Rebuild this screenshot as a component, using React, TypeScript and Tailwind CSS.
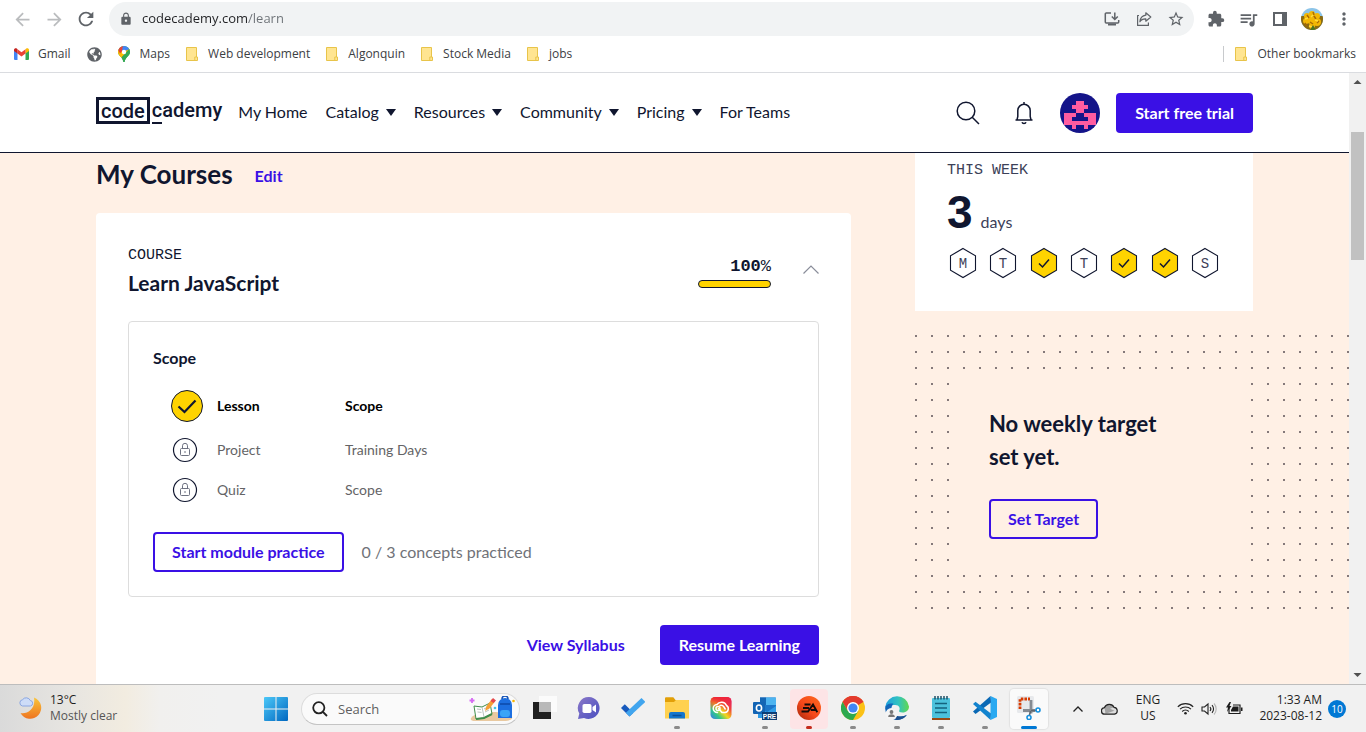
import type { ReactNode } from "react";
import {
  MdArrowBack,
  MdArrowForward,
  MdExtension,
  MdLock,
  MdMoreVert,
  MdQueueMusic,
  MdRefresh,
  MdStarBorder,
} from "react-icons/md";
import { FaGlobeAmericas } from "react-icons/fa";

const NAVY = "#10162f";

/* ---------- Browser chrome ---------- */

function ToolButton({ label, children }: { label: string; children: ReactNode }) {
  return (
    <button aria-label={label} className="flex h-8 w-8 shrink-0 items-center justify-center text-[#5f6368]">
      {children}
    </button>
  );
}

function InstallIcon() {
  return (
    <svg width="16" height="16" viewBox="0 0 16 16" fill="none" stroke="#5f6368" strokeWidth="1.5">
      <path d="M7 2H2.2a.9.9 0 0 0-.9.9v8.2c0 .5.4.9.9.9h11.600a.9.9 0 0 0 .9-.9V9" />
      <path d="M10.800 1.500v6.500M7.800 5.500l3 3 3-3" />
      <path d="M4 13.500h8" strokeWidth="2" />
    </svg>
  );
}

function ShareIcon() {
  return (
    <svg width="16" height="16" viewBox="0 0 16 16" fill="none" stroke="#5f6368" strokeWidth="1.2" strokeLinejoin="round">
      <path d="M3 4.500H1.600v9.900h10.800V11.500" />
      <path d="M9.800 1.800l5 4.200-5 4.200V7.800C7 7.700 5 8.600 3.900 10.800 4.200 7.200 6.200 4.700 9.800 4.200z" />
    </svg>
  );
}

function PhotoAvatar() {
  const petals: [number, number, number][] = [
    [6, 8, 3], [11, 6, 3], [16, 8, 3], [5, 13, 3], [10, 12, 4], [16, 14, 4], [11, 18, 3],
  ];
  return (
    <svg width="22" height="22" viewBox="0 0 22 22">
      <clipPath id="photo"><circle cx="11" cy="11" r="11" /></clipPath>
      <g clipPath="url(#photo)">
        <rect width="22" height="22" fill="#8cc4e8" />
        <path d="M0 8h22v14H0z" fill="#8a6a12" />
        {petals.map(([x, y, r]) => <circle key={`${x}-${y}`} cx={x} cy={y} r={r} fill="#f2b705" />)}
        <path d="M6 7l2 3M13 8l2 3M9 14l3 2M16 15l2-2M4 15l2 3M12 4l1 3" stroke="#a86a06" strokeWidth="1.400" />
        <path d="M4 11l3-1M10 9l2-2M14 12l3 1M8 18l3 1" stroke="#ffdc3c" strokeWidth="1.500" />
        <path d="M9 22l3-5 3 5z" fill="#4c7420" />
      </g>
    </svg>
  );
}

function FolderIcon() {
  return (
    <svg width="12" height="14" viewBox="0 0 12 14" className="mr-[10px] shrink-0">
      <path d="M.5.5h10v9.500h1v3.500H.5z" fill="#ffe591" stroke="#e8c44a" />
      <path d="M8.800 13.500V10h1.700" fill="none" stroke="#e8c44a" />
    </svg>
  );
}

function GmailIcon() {
  return (
    <svg width="15" height="12" viewBox="0 0 15 12" className="mr-[9px] shrink-0">
      <path d="M0 2v9a1 1 0 0 0 1 1h2.500V4.500z" fill="#4285f4" />
      <path d="M15 2v9a1 1 0 0 1-1 1h-2.500V4.500z" fill="#34a853" />
      <path d="M11.500 1.200V5.500L15 3V2c0-1.700-1.900-2.200-3-1.300z" fill="#fbbc04" />
      <path d="M3.500 5.500V1.200L7.500 4.200l4-3v4.300l-4 3z" fill="#ea4335" />
      <path d="M0 2v1l3.500 2.500V1.200L3 .7C1.900-.2 0 .3 0 2z" fill="#c5221f" />
    </svg>
  );
}

function MapsIcon() {
  return (
    <svg width="12" height="16" viewBox="0 0 12 16" className="mr-[10px] shrink-0">
      <clipPath id="pin"><path d="M6 0a6 6 0 0 1 6 6c0 3.800-4.600 5.200-5.300 9.400-.1.800-1.300.8-1.400 0C4.600 11.200 0 9.800 0 6a6 6 0 0 1 6-6z" /></clipPath>
      <g clipPath="url(#pin)">
        <path d="M0 0h12v16H0z" fill="#34a853" />
        <path d="M0 4l6 2-5 6-3-5z" fill="#fbbc04" />
        <path d="M-1 2l2-3h5l-1 5-3 3.500z" fill="#ea4335" />
        <path d="M5-1h6l1 4-5 5-3-3z" fill="#4285f4" />
        <path d="M12 3L3 12l-2-3 6-4z" fill="#fbbc04" />
        <path d="M12 2v14H3l1-5z" fill="#34a853" />
      </g>
      <circle cx="6" cy="6" r="2.200" fill="#fff" />
    </svg>
  );
}

function Bookmark({ icon, label }: { icon: ReactNode; label: string }) {
  return (
    <a href="#" className="flex items-center">
      {icon}
      <span>{label}</span>
    </a>
  );
}

function BrowserBar() {
  return (
    <div className="shrink-0 border-b border-[#dadce0] bg-white font-['Open_Sans','Noto_Sans',sans-serif] text-[#3c4043]">
      <div className="flex h-[38px] items-center px-[6px]">
        <button aria-label="Back" className="flex w-8 justify-center text-[#babcbe]"><MdArrowBack size={21} /></button>
        <button aria-label="Forward" className="flex w-8 justify-center text-[#babcbe]"><MdArrowForward size={21} /></button>
        <ToolButton label="Reload"><MdRefresh size={22} /></ToolButton>
        <div className="ml-[7px] mr-[6px] flex h-[34px] min-w-0 flex-1 items-center rounded-full bg-[#f1f3f4] pl-[10px] pr-[2px]">
          <MdLock size={14} className="mr-[9px] shrink-0 text-[#5f6368]" />
          <input
            aria-label="Address"
            defaultValue="codecademy.com/learn"
            className="min-w-0 flex-1 bg-[linear-gradient(90deg,#202124_106px,#6b7075_106px)] bg-clip-text text-[13px] text-transparent outline-none"
          />
          <ToolButton label="Install app"><InstallIcon /></ToolButton>
          <ToolButton label="Share"><ShareIcon /></ToolButton>
          <ToolButton label="Bookmark this page"><MdStarBorder size={18} /></ToolButton>
        </div>
        <ToolButton label="Extensions"><MdExtension size={18} /></ToolButton>
        <ToolButton label="Media"><MdQueueMusic size={21} /></ToolButton>
        <ToolButton label="Side panel">
          <svg width="14" height="14" viewBox="0 0 14 14"><path d="M0 0h14v14H0zM2 2v10h7V2z" fill="#5f6368" fillRule="evenodd" /></svg>
        </ToolButton>
        <ToolButton label="Profile"><PhotoAvatar /></ToolButton>
        <ToolButton label="Menu"><MdMoreVert size={20} /></ToolButton>
      </div>
      <div className="flex h-[34px] items-center gap-4 px-[14px] pb-[2px] text-xs">
        <Bookmark icon={<GmailIcon />} label="Gmail" />
        <a href="#" aria-label="Website"><FaGlobeAmericas size={15} className="text-[#5f6368]" /></a>
        <Bookmark icon={<MapsIcon />} label="Maps" />
        <Bookmark icon={<FolderIcon />} label="Web development" />
        <Bookmark icon={<FolderIcon />} label="Algonquin" />
        <Bookmark icon={<FolderIcon />} label="Stock Media" />
        <Bookmark icon={<FolderIcon />} label="jobs" />
        <div className="-mr-1 ml-auto flex h-4 items-center border-l border-[#c8cacd] pl-[11px]">
          <Bookmark icon={<FolderIcon />} label="Other bookmarks" />
        </div>
      </div>
    </div>
  );
}

/* ---------- Site header ---------- */

function NavItem({ label, menu }: { label: string; menu?: boolean }) {
  if (!menu) return <a href="#">{label}</a>;
  return (
    <button className="flex items-center gap-[7px]">
      {label}
      <svg width="10" height="7" viewBox="0 0 10 7"><path d="M0 0h10L5 7z" fill={NAVY} /></svg>
    </button>
  );
}

function PixelAvatar() {
  return (
    <svg width="40" height="40" viewBox="0 0 10 10" shapeRendering="crispEdges">
      <clipPath id="round"><circle cx="5" cy="5" r="5" /></clipPath>
      <circle cx="5" cy="5" r="5" fill="#141489" shapeRendering="auto" />
      <path
        clipPath="url(#round)"
        fill="#ff5ca0"
        d="M4 2h2v1h1v1H6v1h3v3H7v1H6V8H4v1H3V8H1V5h3V4H3V3h1zM4 5v1H3v1h4V6H6V5z"
        fillRule="evenodd"
      />
    </svg>
  );
}

function Logo() {
  return (
    <a href="#" className="flex items-center pb-[5px] font-[Roboto,sans-serif] text-[20px] font-medium leading-[20px]">
      <span className="flex h-[27px] items-center border-[3px] border-[#10162f] px-[2px]">code</span>
      <span className="ml-[2px]">
        <span className="inline-block h-[26px] border-b-2 border-[#10162f] pt-[2px]">c</span>ademy
      </span>
    </a>
  );
}

function SiteHeader() {
  return (
    <header className="flex h-20 shrink-0 items-center border-b border-[#10162f] bg-white px-24 pt-px">
      <Logo />
      <nav className="ml-4 flex items-center gap-[18px] pb-[2px]">
        <NavItem label="My Home" />
        <NavItem label="Catalog" menu />
        <NavItem label="Resources" menu />
        <NavItem label="Community" menu />
        <NavItem label="Pricing" menu />
        <NavItem label="For Teams" />
      </nav>
      <div className="ml-auto flex items-center">
        <button aria-label="Search" className="mr-8">
          <svg width="24" height="24" viewBox="0 0 24 24" fill="none" stroke={NAVY} strokeWidth="1.500">
            <circle cx="10" cy="10" r="8.800" />
            <path d="M16.200 16.200L23 23" />
          </svg>
        </button>
        <button aria-label="Notifications" className="mr-6">
          <svg width="24" height="24" viewBox="0 0 24 24" fill="none" stroke={NAVY} strokeWidth="1.500">
            <path d="M12 1v2M3.500 19h17M5 19l.8-3.500V9.500a6.200 6.200 0 0 1 12.400 0v6L19 19" />
            <path d="M10 21.300c.5 1.500 3.500 1.500 4 0" />
          </svg>
        </button>
        <button aria-label="Account" className="mr-4"><PixelAvatar /></button>
        <button className="h-10 rounded bg-[#3a10e5] px-[19px] font-bold text-white">Start free trial</button>
      </div>
    </header>
  );
}

/* ---------- My courses ---------- */

function DoneIcon() {
  return (
    <svg width="32" height="32" viewBox="0 0 32 32" fill="none" stroke={NAVY}>
      <circle cx="16" cy="16" r="15.500" fill="#ffd300" />
      <path d="M7.500 16.500l6 5.500L24.500 10.500" strokeWidth="2.200" />
    </svg>
  );
}

function LockedIcon() {
  return (
    <svg width="28" height="28" viewBox="0 0 28 28" fill="none" stroke={NAVY}>
      <circle cx="14" cy="14" r="11.500" strokeWidth="1.200" />
      <g stroke="#6f7382">
        <rect x="9.500" y="12.500" width="9" height="7" rx="1" />
        <path d="M11.500 12.500v-2.700a2.500 2.500 0 0 1 5 0v2.700M14 15v2" />
      </g>
    </svg>
  );
}

const modules = [
  { kind: "Lesson", name: "Scope", done: true },
  { kind: "Project", name: "Training Days", done: false },
  { kind: "Quiz", name: "Scope", done: false },
];

function Courses() {
  return (
    <section>
      <div className="flex h-[60px] items-start gap-[22px]">
        <h1 className="text-[26px] font-bold leading-[42px]">My Courses</h1>
        <button className="pt-[11px] font-bold leading-6 text-[#3a10e5]">Edit</button>
      </div>
      <article className="rounded-sm bg-white p-8">
        <div className="flex items-center">
          <div>
            <p className="font-['Liberation_Mono',monospace] text-[15px] leading-[22px]">COURSE</p>
            <h2 className="text-[21px] font-bold leading-8">Learn JavaScript</h2>
          </div>
          <div className="ml-auto flex flex-col items-end">
            <p className="font-['Liberation_Mono',monospace] text-[17px] leading-6">
              <strong>100</strong>%
            </p>
            <div className="mb-px mt-px h-2 w-[73px] rounded-full border border-[#10162f] bg-[#ffd300]" />
          </div>
          <button aria-label="Collapse course" className="ml-8">
            <svg width="16" height="16" viewBox="0 0 16 16" fill="none" stroke="#8a8d9a" strokeWidth="1.200">
              <path d="M.5 9.500L8 2l7.500 7.500" />
            </svg>
          </button>
        </div>
        <div className="mt-[22px] rounded-sm border border-[#dddddd] p-6">
          <h3 className="font-bold leading-6">Scope</h3>
          <ul className="mt-3 text-sm">
            {modules.map((m) => (
              <li
                key={m.kind}
                className={
                  m.done
                    ? "flex h-12 items-center pl-[18px] font-bold text-black"
                    : "flex h-10 items-center pl-[18px] text-[#646466]"
                }
              >
                <span className="w-[46px]">{m.done ? <DoneIcon /> : <LockedIcon />}</span>
                <span className="w-32">{m.kind}</span>
                <span>{m.name}</span>
              </li>
            ))}
          </ul>
          <div className="mt-[22px] flex items-center gap-[18px]">
            <button className="h-10 rounded border-2 border-[#3a10e5] px-[17px] font-bold text-[#3a10e5]">
              Start module practice
            </button>
            <span className="text-[#707278]">0 / 3 concepts practiced</span>
          </div>
        </div>
        <div className="mt-7 flex items-center justify-end gap-4">
          <button className="h-10 px-[19px] font-bold text-[#3a10e5]">View Syllabus</button>
          <button className="h-10 rounded bg-[#3a10e5] px-[19px] font-bold text-white">Resume Learning</button>
        </div>
      </article>
    </section>
  );
}

/* ---------- Weekly target ---------- */

const week = [
  { day: "M", done: false },
  { day: "T", done: false },
  { day: "W", done: true },
  { day: "T", done: false },
  { day: "T", done: true },
  { day: "F", done: true },
  { day: "S", done: false },
];

function DayHexagon({ day, done }: { day: string; done: boolean }) {
  return (
    <svg width="32" height="32" viewBox="0 0 32 32" fill="none" stroke={NAVY}>
      <path d="M16 1.500l12.500 7.300v14.400L16 30.500 3.500 23.200V8.800z" fill={done ? "#ffd300" : "#fff"} strokeWidth="1.100" />
      {done ? (
        <path d="M11 16.500l3.500 3.500L21 12.500" strokeWidth="1.500" />
      ) : (
        <text x="16" y="21" textAnchor="middle" fill="#3c4158" stroke="none" fontSize="14" fontFamily="Liberation Mono">
          {day}
        </text>
      )}
    </svg>
  );
}

function WeeklyTarget() {
  return (
    <aside>
      <div className="bg-white px-8 pb-8 pt-2">
        <h2 className="font-['Liberation_Mono',monospace] text-[15px] leading-5 text-[#3c4158]">THIS WEEK</h2>
        <p className="mt-[6px] flex h-12 items-baseline gap-2">
          <strong className="font-['Liberation_Sans',sans-serif] text-[46px] leading-[50px]">3</strong>
          <span className="leading-5 text-[#3c4158]">days</span>
        </p>
        <div className="mt-3 flex justify-between">
          {week.map((d, i) => <DayHexagon key={i} day={d.day} done={d.done} />)}
        </div>
      </div>
      <div className="-mr-24 mt-6 bg-[radial-gradient(circle_at_1px_1px,#85797a_1px,transparent_1px)] bg-[size:16px_16px] py-[34px] pl-[34px] pr-[100px]">
        <div className="bg-[#fff0e5] px-10 pb-9 pt-[38px]">
          <h2 className="text-[22px] font-bold leading-[33px]">No weekly target<br />set yet.</h2>
          <button className="mt-[26px] h-10 rounded border-2 border-[#3a10e5] px-[17px] font-bold text-[#3a10e5]">Set Target</button>
        </div>
      </div>
    </aside>
  );
}

function Scrollbar() {
  return (
    <div aria-hidden="true" className="flex w-[17px] shrink-0 flex-col items-center bg-[#f1f1f1]">
      <svg width="17" height="17" viewBox="0 0 17 17"><path d="M4.500 11l4-4 4 4z" fill="#505050" /></svg>
      <div className="mt-[42px] h-32 w-[13px] bg-[#c1c1c1]" />
      <svg width="17" height="17" viewBox="0 0 17 17" className="mt-auto"><path d="M4.500 6l4 4 4-4z" fill="#505050" /></svg>
    </div>
  );
}

/* ---------- Taskbar ---------- */

function TaskApp({ label, state, children }: { label: string; state?: "open" | "alert" | "active"; children: ReactNode }) {
  const tile =
    state === "alert" ? "bg-[#fde4e6]" : state === "active" ? "bg-[#fafafa] shadow-[0_0_1px_1px_#e2e2e2]" : "";
  const mark =
    state === "alert" ? "w-[6px] bg-[#c42b1c]" : state === "active" ? "w-4 bg-[#0078d4]" : state === "open" ? "w-[6px] bg-[#8a8a8a]" : "w-0";
  return (
    <button aria-label={label} className="flex w-11 justify-center">
      <span className={`flex h-10 w-[38px] flex-col items-center justify-between rounded pt-[7px] ${tile}`}>
        <svg width="24" height="24" viewBox="0 0 24 24">{children}</svg>
        <span className={`h-[3px] rounded-full ${mark}`} />
      </span>
    </button>
  );
}

function TaskApps() {
  return (
    <div className="ml-[3px] flex shrink-0">
      <TaskApp label="Task view">
        <path d="M0 6h18v17H0z" fill="#1f1f1f" />
        <path d="M6 0h18v16H6z" fill="#fbfbfb" fillOpacity=".96" />
        <path d="M6 6h12v10H6z" fill="#b9b9b9" />
      </TaskApp>
      <TaskApp label="Chat">
        <defs><linearGradient id="chat" x2="1" y2="1"><stop stopColor="#8a78c8" /><stop offset="1" stopColor="#4a4fc0" /></linearGradient></defs>
        <path d="M12 1a11 11 0 1 1-5 21l-6 1 1.300-5.500A11 11 0 0 1 12 1z" fill="url(#chat)" />
        <rect x="5.500" y="8" width="9" height="9" rx="1.800" fill="#fff" />
        <path d="M15.500 11l3.500-2.500v8L15.500 14z" fill="#fff" />
      </TaskApp>
      <TaskApp label="To Do">
        <path d="M0 12l3.800-3.800 8.500 8.500L8.500 20.500z" fill="#185abd" />
        <path d="M4.800 16.800L20.500 2 24.300 5.900 8.600 20.600z" fill="#41a5ee" />
      </TaskApp>
      <TaskApp label="File Explorer" state="open">
        <path d="M0 2.500C0 1.700.5 1.200 1.300 1.200h7L10.500 4H23c.6 0 1 .4 1 1v17H0z" fill="#e2a009" />
        <path d="M0 6h9l2-2h12c.6 0 1 .4 1 1v17.500H0z" fill="#ffd150" />
        <path d="M4 22.500V18a2 2 0 0 1 2-2h12a2 2 0 0 1 2 2v4.500z" fill="#1576cc" />
        <path d="M7.500 19.500h9" stroke="#0a4f96" strokeWidth="1.500" />
      </TaskApp>
      <TaskApp label="Creative Cloud">
        <defs>
          <linearGradient id="cc" x1="0" y1="1" x2="1" y2="0">
            <stop stopColor="#3975f5" /><stop offset=".25" stopColor="#31c986" /><stop offset=".45" stopColor="#f2d81c" /><stop offset=".7" stopColor="#f04437" /><stop offset="1" stopColor="#d62bb3" />
          </linearGradient>
          <linearGradient id="cc2" x2="0" y2="1"><stop stopColor="#ef2438" /><stop offset=".6" stopColor="#ef2438" stopOpacity="0" /></linearGradient>
        </defs>
        <rect x="1.500" y="1" width="21" height="22" rx="4.500" fill="url(#cc)" />
        <rect x="1.500" y="1" width="21" height="22" rx="4.500" fill="url(#cc2)" />
        <g fill="none" stroke="#fff" strokeWidth="1.500" strokeLinecap="round">
          <path d="M8.500 16.500a4 4 0 0 1-.5-8 5.500 5.500 0 0 1 9.500 1 3.800 3.800 0 0 1-1.500 7h-3l-3.500-4" />
          <circle cx="9" cy="12.500" r="2" />
          <path d="M11 9.500c2-1 3 0 4 1.500l1.200 2" />
        </g>
      </TaskApp>
      <TaskApp label="Outlook" state="open">
        <path d="M7 1.500h15a1 1 0 0 1 1 1V22H7z" fill="#1b75c9" />
        <path d="M13 1.500h10V9H13z" fill="#4db4f0" />
        <path d="M7 1.500h6V9H7z" fill="#1466b5" />
        <path d="M5 11l9 5 9-6v12H5z" fill="#2f9be6" />
        <rect x="0" y="6" width="12" height="12" rx="1" fill="#1264b4" />
        <ellipse cx="6" cy="12" rx="2.600" ry="3" fill="none" stroke="#fff" strokeWidth="1.600" />
        <rect x="9" y="16" width="15" height="8" fill="#0d3c73" />
        <text x="16.500" y="22.500" textAnchor="middle" fill="#fff" fontSize="6.500" fontWeight="700" fontFamily="Liberation Sans">PRE</text>
      </TaskApp>
      <TaskApp label="EA" state="alert">
        <defs><linearGradient id="ea" x1="1" x2="0" y2="1"><stop stopColor="#ff6a1e" /><stop offset=".55" stopColor="#f5471a" /><stop offset="1" stopColor="#a3260b" /></linearGradient></defs>
        <circle cx="12" cy="12" r="12" fill="url(#ea)" />
        <path d="M7.500 8.500h6M6 12h6M4.500 15.500h6.500l5-7 4.300 7.800M13.800 14h5" fill="none" stroke="#160b08" strokeWidth="1.900" />
      </TaskApp>
      <TaskApp label="Chrome" state="open">
        <circle cx="12" cy="12" r="12" fill="#fbc116" />
        <path d="M12 12L1.600 6A12 12 0 0 1 22.400 6z" fill="#e33b2e" />
        <path d="M12 6h10.400A12 12 0 0 0 1.600 6l5.200 9z" fill="#e33b2e" />
        <path d="M1.600 6a12 12 0 0 0 10.400 18l5.200-9H6.800z" fill="#2da94f" />
        <circle cx="12" cy="12" r="6" fill="#fff" />
        <circle cx="12" cy="12" r="4.600" fill="#4285f4" />
      </TaskApp>
      <TaskApp label="Edge" state="open">
        <defs><linearGradient id="edge" x2="1"><stop stopColor="#1e9fe0" /><stop offset=".55" stopColor="#31c3c0" /><stop offset="1" stopColor="#63d84e" /></linearGradient></defs>
        <path d="M.2 11A12 12 0 0 1 24 10.500c0 3.500-2.500 6-6.500 6-2.500 0-4-1-3.300-2 1.200-2 .2-5.500-4-5.500C6 9 1.500 11 .2 11z" fill="url(#edge)" />
        <path d="M.1 12C1 8 5.500 7 8.500 7.800 5 11 6 18 12 20c4 1.200 7.500 0 9.800-1A12 12 0 0 1 .1 12z" fill="#1266b8" />
        <path d="M8.500 12.500c-1.500 5 3 8.500 8 8 2.500-.3 4.500-1 5.500-1.700A12 12 0 0 1 12 24c-6-1-6-9-3.500-11.500z" fill="#1b4f8e" />
        <circle cx="6.500" cy="18" r="6" fill="#f4f4f4" />
        <circle cx="6.500" cy="16" r="1.900" fill="#777" />
        <path d="M3.200 21a3.300 2.800 0 0 1 6.600 0z" fill="#777" />
      </TaskApp>
      <TaskApp label="Notepad" state="open">
        <path d="M3 22h18v2H3z" fill="#9a4a15" />
        <rect x="3" y="2" width="18" height="20" rx="1" fill="#4cc2dc" />
        <path d="M6 7.500h12M6 12h12M6 16.500h12" stroke="#14637e" strokeWidth="1.400" />
        <path d="M6 0v3.500M9 0v3.500M12 0v3.500M15 0v3.500M18 0v3.500" stroke="#1c4f66" strokeWidth="1.500" />
      </TaskApp>
      <TaskApp label="Visual Studio Code" state="open">
        <path d="M17.500 0L24 3v18l-6.500 3z" fill="#29a9f1" />
        <path d="M17.500 0L0 15.500 2.500 18 18 6.500z" fill="#0a69b5" />
        <path d="M0 8l2.500-2.200L18 17.500 17.500 24z" fill="#1283ce" />
      </TaskApp>
      <TaskApp label="Snipping Tool" state="active">
        <rect x="0" y="0" width="17" height="17" rx="1.500" fill="#e7e9ec" />
        <path d="M3 13V3h10" fill="none" stroke="#d83b01" strokeWidth="2.800" strokeDasharray="2.600 1" />
        <path d="M14 4v13.500M6 14.500h12" fill="none" stroke="#858b92" strokeWidth="2.800" />
        <path d="M14 14.500h6M13.500 15l-1.500 6" stroke="#5f666e" strokeWidth="1.500" />
        <g fill="#fff" stroke="#1490df" strokeWidth="1.600"><circle cx="21" cy="14" r="2" /><circle cx="12" cy="21.500" r="2" /></g>
      </TaskApp>
    </div>
  );
}

function SearchArt() {
  return (
    <svg width="46" height="26" viewBox="0 0 46 26" className="shrink-0">
      <path d="M2 22c4-5 12-6 22-6s18 3 19 5-2 4-8 4H6c-3 0-5-1-4-3z" fill="#e9c9a0" />
      <path d="M5 10l8 1 8-4 2 11-8 4-8 1z" fill="#fff" stroke="#3f8d4b" strokeWidth="1" />
      <path d="M7 23l8-1 8-4" fill="none" stroke="#3f8d4b" strokeWidth="2" />
      <path d="M13 11l2 10M8 13l4 .5M8.500 16l4 .4M15 13l4-2M16 16l4-2" stroke="#bac4c0" />
      <path d="M16 15l1.500-5 5.500-7 3 2.500-5.500 7z" fill="#f6a037" />
      <path d="M21.500 5L24 2l3 2.500L24.500 7z" fill="#e5484d" />
      <path d="M29 9a7 7 0 0 1 14 0v13H29z" fill="#1d6fe0" />
      <path d="M33 3c0-4 6-4 6 0" fill="none" stroke="#1552b5" strokeWidth="1.500" />
      <rect x="31" y="14" width="10" height="7" rx="3" fill="#39a4f7" />
      <path d="M31 8h10" stroke="#0d49a8" strokeWidth="1.500" />
      <path d="M3 2v5M.5 4.500h5" stroke="#d56bf2" strokeWidth="1.800" />
      <circle cx="26" cy="12" r="1.300" fill="#3ec6e8" />
      <circle cx="44.500" cy="5" r="1.300" fill="#f7b500" />
    </svg>
  );
}

function Taskbar() {
  return (
    <footer className="flex h-12 shrink-0 items-center border-t border-[#bdbdbd] bg-[linear-gradient(90deg,#dadada,#e7e5e1_70px,#f2ece0_125px,#f1f0ee_160px,#f1f1f1_220px)] font-['Open_Sans','Noto_Sans',sans-serif] text-xs leading-4 text-[#1f1f1f]">
      <button className="flex w-[264px] items-center pb-px pl-[18px] text-left">
        <svg width="24" height="24" viewBox="0 0 24 24" className="mr-2 shrink-0">
          <defs><linearGradient id="moon" x2="0" y2="1"><stop stopColor="#f9c53b" /><stop offset="1" stopColor="#ee7420" /></linearGradient></defs>
          <path d="M16 1.500A11 11 0 1 1 2.500 17C9 18.500 18 13 16 1.500z" fill="url(#moon)" />
          <path d="M4.500 10a3.200 3.200 0 0 1 0-6.300 4.500 4.500 0 0 1 7.800.8 2.800 2.800 0 0 1 .2 5.500z" fill="#cddcf8" stroke="#8aa6e2" />
        </svg>
        <span><span className="block">13°C</span><span className="block text-[#555]">Mostly clear</span></span>
      </button>
      <button aria-label="Start" className="shrink-0">
        <svg width="24" height="24" viewBox="0 0 24 24">
          <defs><linearGradient id="win" x2="1" y2="1"><stop stopColor="#4cc8f8" /><stop offset="1" stopColor="#0067c0" /></linearGradient></defs>
          <path d="M1 0h10.500v11.500H0V1a1 1 0 0 1 1-1zM12.500 0H23a1 1 0 0 1 1 1v10.500H12.500zM0 12.500h11.500V24H1a1 1 0 0 1-1-1zM12.500 12.500H24V23a1 1 0 0 1-1 1H12.500z" fill="url(#win)" />
        </svg>
      </button>
      <label className="ml-[13px] flex h-8 w-[219px] shrink-0 items-center rounded-full border border-[#dcdcdc] border-b-[#c4c4c4] bg-[#fafafa] pl-[10px] pr-1">
        <svg width="16" height="16" viewBox="0 0 16 16" fill="none" stroke="#222" strokeWidth="1.800">
          <circle cx="6.800" cy="6.800" r="5.600" /><path d="M11 11l4 4" />
        </svg>
        <input aria-label="Search" placeholder="Search" className="ml-[10px] w-0 flex-1 text-[13px] outline-none placeholder:text-[#5f5f5f]" />
        <SearchArt />
      </label>
      <TaskApps />
      <div className="ml-auto flex items-center pr-5">
        <svg width="10" height="6" viewBox="0 0 10 6" fill="none" stroke="#222" strokeWidth="1.300"><path d="M.5 5.500L5 1l4.500 4.500" /></svg>
        <svg width="17" height="12" viewBox="0 0 17 12" className="ml-[18px]">
          <path d="M4 11.200a3.300 3.300 0 0 1-.5-6.600 5.200 5.200 0 0 1 9.500-.3 3.500 3.500 0 0 1 .5 6.900z" fill="#dedede" />
          <path d="M3.500 4.600a5.200 5.200 0 0 1 9.500-.3l-4 1.500 4.500 2-9 2.900z" fill="#a2a2a2" />
          <path d="M4 11.200a3.300 3.300 0 0 1-.5-6.600 5.200 5.200 0 0 1 9.500-.3 3.500 3.500 0 0 1 .5 6.900z" fill="none" stroke="#222" strokeWidth="1.200" />
        </svg>
        <span className="ml-[16px] w-[28px] pb-px text-center">ENG<br />US</span>
        <svg width="17" height="13" viewBox="0 0 17 13" fill="none" stroke="#222" strokeWidth="1.100" className="ml-[15px]">
          <path d="M.8 4.800a11 11 0 0 1 15.400 0M3 7.200a7.800 7.800 0 0 1 11 0M5.200 9.500a4.700 4.700 0 0 1 6.600 0" />
          <circle cx="8.500" cy="11.200" r="1.300" fill="#222" stroke="none" />
        </svg>
        <svg width="16" height="14" viewBox="0 0 16 14" fill="none" stroke="#222" strokeWidth="1.100" className="ml-[7px]">
          <path d="M1 5v4h2.500L7 12V2L3.500 5z" /><path d="M9 5a3 3 0 0 1 0 4M11 3.200a5.500 5.500 0 0 1 0 7.600" /><path d="M13 1.500a8 8 0 0 1 0 11" stroke="#b5b5b5" />
        </svg>
        <svg width="17" height="13" viewBox="0 0 17 13" className="ml-[9px]">
          <path d="M3 6v5.500h11V3H7" fill="none" stroke="#1d1d1d" strokeWidth="1.200" /><path d="M5 9.500h7.500v-5H7L5 8zM15 5.500h1.500v3.500H15zM3.500 0L0 5.500h2L1 10l4.500-6H3.500L5 0z" fill="#1d1d1d" />
        </svg>
        <span className="ml-[15px] w-[64px] pb-px text-right">1:33 AM<br /><span className="whitespace-nowrap">2023-08-12</span></span>
        <span className="ml-[6px] flex h-[18px] w-[18px] items-center justify-center rounded-full bg-[#0078d4] text-[10px] text-white">10</span>
      </div>
    </footer>
  );
}

export default function App() {
  return (
    <div className="flex h-screen flex-col overflow-hidden">
      <BrowserBar />
      <div className="flex min-h-0 flex-1">
        <div className="flex min-w-0 flex-1 flex-col overflow-hidden bg-[#fff0e5] font-[Lato,sans-serif] text-base text-[#10162f]">
          <SiteHeader />
          <main className="grid min-h-0 flex-1 grid-cols-[minmax(0,1fr)_338px] items-start gap-16 overflow-hidden px-24">
            <Courses />
            <WeeklyTarget />
          </main>
        </div>
        <Scrollbar />
      </div>
      <Taskbar />
    </div>
  );
}
